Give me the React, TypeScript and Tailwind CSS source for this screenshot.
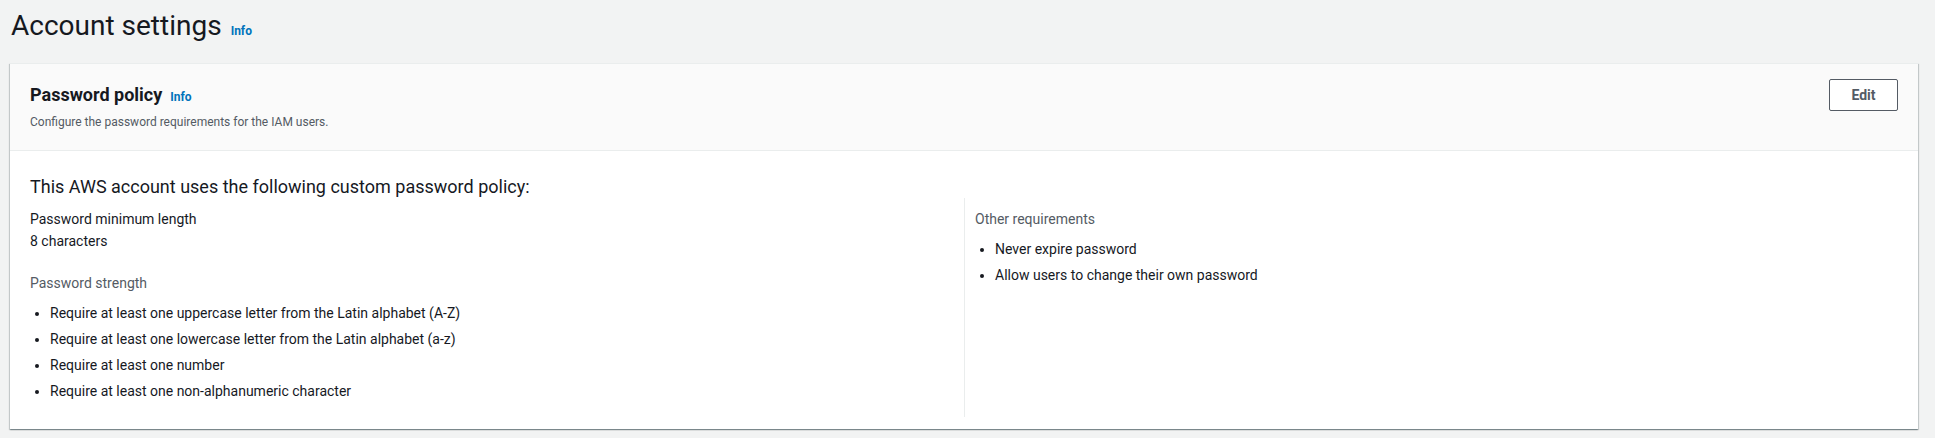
import React from "react";

const strength = [
  "Require at least one uppercase letter from the Latin alphabet (A-Z)",
  "Require at least one lowercase letter from the Latin alphabet (a-z)",
  "Require at least one number",
  "Require at least one non-alphanumeric character",
];

const other = ["Never expire password", "Allow users to change their own password"];

function InfoLink() {
  return <span className="text-[12px] font-bold leading-4 text-[#0073bb]">Info</span>;
}

function BulletList({ items }: { items: string[] }) {
  return (
    <ul className="flex list-disc flex-col gap-[6px] pl-[20px] text-[14px] leading-5 text-[#16191f]">
      {items.map((item) => (
        <li key={item}>{item}</li>
      ))}
    </ul>
  );
}

export default function App() {
  return (
    <div className="min-h-[438px] bg-[#f2f3f3] pt-[8px] font-['Roboto',sans-serif] text-[#16191f]">
      <div className="flex items-baseline gap-[9px] pl-[11px]">
        <h1 className="text-[28px] leading-9 font-normal">Account settings</h1>
        <InfoLink />
      </div>

      <div className="mt-[19px] mr-[17px] ml-[10px] border-t border-[#eaeded] bg-white shadow-[0_1px_1px_0_rgba(0,28,36,0.3),1px_1px_1px_0_rgba(0,28,36,0.15),-1px_1px_1px_0_rgba(0,28,36,0.15)]">
        {/* header */}
        <div className="flex items-start justify-between border-b border-[#eaeded] bg-[#fafafa] px-5 pt-[15px] pb-5">
          <div className="pt-[5px]">
            <div className="flex items-baseline gap-[8px]">
              <h2 className="text-[18px] leading-[22px] font-bold">Password policy</h2>
              <InfoLink />
            </div>
            <p className="mt-[8px] text-[12px] leading-4 text-[#545b64]">
              Configure the password requirements for the IAM users.
            </p>
          </div>
          <button className="h-[32px] w-[69px] rounded-[2px] border border-[#545b64] bg-white text-[14px] font-bold text-[#545b64]">
            Edit
          </button>
        </div>

        {/* body */}
        <div className="px-5 pt-[25px] pb-[12px]">
          <h3 className="text-[18px] leading-[22px] font-normal">
            This AWS account uses the following custom password policy:
          </h3>
          <div className="grid grid-cols-2">
            <div className="pt-[11px] pb-[16px] pr-[10px]">
              <div className="text-[14px] leading-5">Password minimum length</div>
              <div className="mt-[2px] text-[14px] leading-5">8 characters</div>
              <div className="mt-[22px] text-[14px] leading-5 text-[#545b64]">Password strength</div>
              <div className="mt-[10px]">
                <BulletList items={strength} />
              </div>
            </div>
            <div className="border-l border-[#eaeded] pt-[11px] pl-[10px]">
              <div className="text-[14px] leading-5 text-[#545b64]">Other requirements</div>
              <div className="mt-[10px]">
                <BulletList items={other} />
              </div>
            </div>
          </div>
        </div>
      </div>
    </div>
  );
}
